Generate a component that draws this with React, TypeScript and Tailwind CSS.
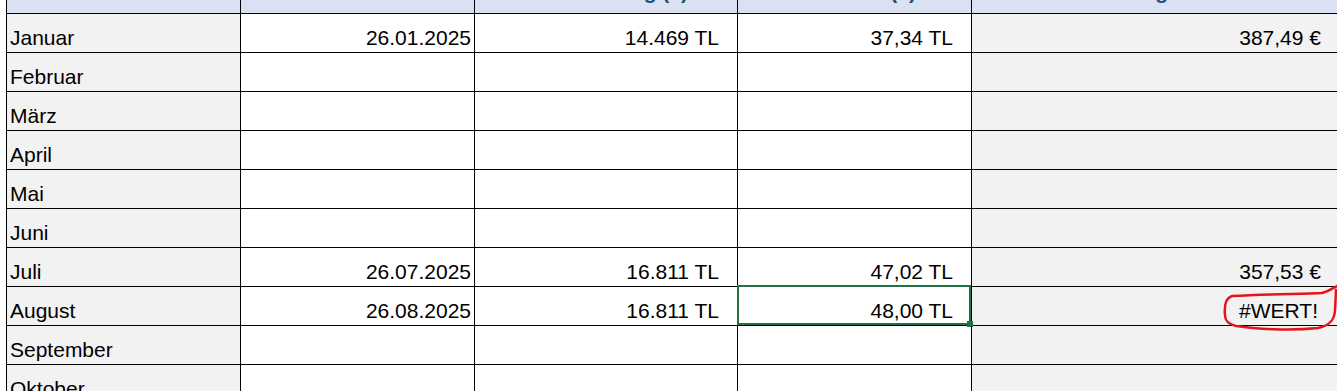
import React from "react";

type Row = {
  month: string;
  date?: string;
  amount?: string;
  fee?: string;
  euro?: string;
  selected?: boolean;
  error?: boolean;
};

const rows: Row[] = [
  { month: "Januar", date: "26.01.2025", amount: "14.469 TL", fee: "37,34 TL", euro: "387,49 €" },
  { month: "Februar" },
  { month: "März" },
  { month: "April" },
  { month: "Mai" },
  { month: "Juni" },
  { month: "Juli", date: "26.07.2025", amount: "16.811 TL", fee: "47,02 TL", euro: "357,53 €" },
  { month: "August", date: "26.08.2025", amount: "16.811 TL", fee: "48,00 TL", euro: "#WERT!", selected: true, error: true },
  { month: "September" },
  { month: "Oktober" },
];

const cell = "flex h-[39px] items-end border-r border-b border-black pb-[2px] leading-[24px]";
const head = "flex h-[14px] items-end overflow-hidden border-r border-b border-black bg-[#D9E1F2] pb-[9px] leading-[24px] font-bold text-[#1F4E79]";

export default function App() {
  return (
    <div
      className="relative h-[391px] w-[1337px] overflow-hidden bg-white text-[21px] text-black"
      style={{ fontFamily: '"Liberation Sans", Arial, sans-serif' }}
    >
      <div className="ml-[6px] grid grid-cols-[234px_234px_263px_234px_1fr] border-l border-black">
        <div className={`${head} justify-center`}>Monat</div>
        <div className={`${head} justify-center`}>Datum</div>
        <div className={`${head} justify-end pr-[49px]`}>Überweisung (€)</div>
        <div className={`${head} justify-end pr-[55px]`}>Gebühr (€)</div>
        <div className={`${head} justify-end border-r-0 pr-[169px]`}>Umrechnung</div>

        {rows.map((r) => (
          <React.Fragment key={r.month}>
            <div className={`${cell} bg-[#F2F2F2] pl-[3px]`}>{r.month}</div>
            <div className={`${cell} justify-end pr-[3px]`}>{r.date}</div>
            <div className={`${cell} justify-end pr-[18px]`}>{r.amount}</div>
            <div className={`${cell} relative justify-end pr-[18px]`}>
              {r.fee}
              {r.selected && (
                <div className="absolute -left-px -top-[2px] right-0 bottom-0 border-2 border-[#217346]">
                  <div className="absolute -right-[4px] -bottom-[4px] h-[6px] w-[6px] bg-[#217346]" />
                </div>
              )}
            </div>
            <div className={`${cell} justify-end border-r-0 bg-[#F2F2F2] ${r.error ? "pr-[19px]" : "pr-[16px]"}`}>
              {r.euro}
            </div>
          </React.Fragment>
        ))}
      </div>

      <svg className="pointer-events-none absolute left-0 top-0" width="1337" height="391" viewBox="0 0 1337 391">
        <path
          d="M1337 286 C1333 288 1330 291 1322 293 C1300 294 1265 294 1232 296 C1226 298 1224 305 1225 315 C1225 321 1228 324 1236 326 C1256 329 1290 331 1318 328 C1329 326 1334 321 1335 311 L1336 290"
          fill="none"
          stroke="#E5141B"
          strokeWidth="2.5"
          strokeLinecap="round"
          strokeLinejoin="round"
        />
      </svg>
    </div>
  );
}
